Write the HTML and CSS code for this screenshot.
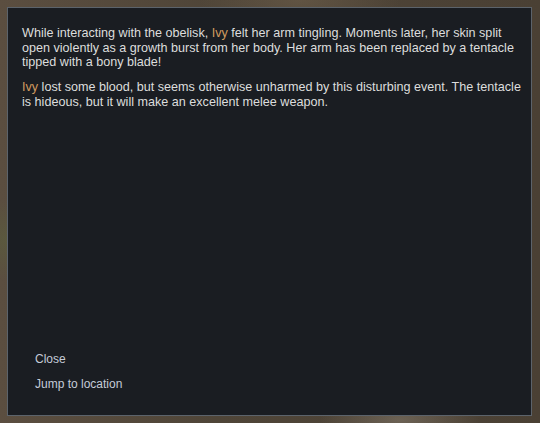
FILE: index.html
```html
<!DOCTYPE html>
<html>
<head>
<meta charset="utf-8">
<link rel="stylesheet" href="styles.css">
</head>
<body>
<div class="dialog">
  <div class="message">
    <p>While interacting with the obelisk, <span class="pawn">Ivy</span> felt her arm tingling. Moments later, her skin split<br>open violently as a growth burst from her body. Her arm has been replaced by a tentacle<br>tipped with a bony blade!</p>
    <p><span class="pawn">Ivy</span> lost some blood, but seems otherwise unharmed by this disturbing event. The tentacle<br>is hideous, but it will make an excellent melee weapon.</p>
  </div>
  <div class="options">
    <div class="option">Close</div>
    <div class="option">Jump to location</div>
  </div>
</div>
</body>
</html>
```

FILE: styles.css
```css
html, body {
  margin: 0;
  padding: 0;
  width: 540px;
  height: 423px;
  overflow: hidden;
}
body {
  background:
    radial-gradient(ellipse 60px 40px at 10px 240px, rgba(90,100,60,0.5), transparent),
    radial-gradient(ellipse 80px 30px at 400px 420px, rgba(140,130,115,0.5), transparent),
    radial-gradient(ellipse 100px 40px at 300px 0px, rgba(110,95,75,0.6), transparent),
    linear-gradient(90deg, #5b4e40 0%, #4f4538 40%, #4a4034 100%);
  font-family: "Liberation Sans", Arial, sans-serif;
  padding: 7px 8px 7px 7px;
  box-sizing: border-box;
}
.dialog {
  width: 525px;
  height: 409px;
  box-sizing: border-box;
  background: #1a1d22;
  border: 1px solid #5c636b;
  padding: 18px 4px 23px 14px;
  display: flex;
  flex-direction: column;
  justify-content: space-between;
}
.message p {
  margin: 0 0 10.5px 0;
  color: #dddddd;
  font-size: 12.6px;
  line-height: 14.6px;
  white-space: nowrap;
}
.pawn {
  color: #d09a5f;
}
.options {
  display: flex;
  flex-direction: column;
  gap: 10px;
  padding-left: 13px;
}
.option {
  color: #c5cbd8;
  font-size: 12px;
  line-height: 15px;
}
```
